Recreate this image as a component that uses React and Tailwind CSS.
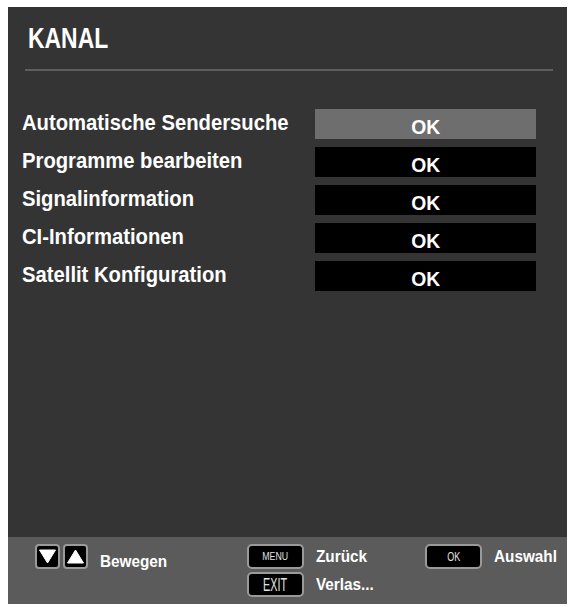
import React from "react";

const rows = [
  "Automatische Sendersuche",
  "Programme bearbeiten",
  "Signalinformation",
  "CI-Informationen",
  "Satellit Konfiguration",
];

const Key = ({ children, textClass }) => (
  <div className="flex h-[25px] w-[57px] shrink-0 items-center justify-center rounded-[5px] border-2 border-[#9a9a9a] bg-black">
    <span className={`inline-block font-normal leading-none text-[#e0e0e0] ${textClass}`}>
      {children}
    </span>
  </div>
);

const ArrowKey = ({ down }) => (
  <div className="flex h-[25px] w-[25px] items-center justify-center rounded-[4px] border-2 border-[#9a9a9a] bg-black">
    <svg width="17" height="15" viewBox="0 0 17 15">
      {down ? (
        <polygon points="0.5,1 16.5,1 8.5,14" fill="#fff" strokeLinejoin="round" stroke="#fff" strokeWidth="1" />
      ) : (
        <polygon points="0.5,14 16.5,14 8.5,1" fill="#fff" strokeLinejoin="round" stroke="#fff" strokeWidth="1" />
      )}
    </svg>
  </div>
);

export default function App() {
  return (
    <div className="min-h-[607px] w-[574px] bg-white pt-[7px] pl-[8px] font-['Liberation_Sans',Arial,sans-serif] font-bold text-white">
      <div className="flex h-[597px] w-[559px] flex-col bg-[#343434]">
        {/* Title */}
        <div className="px-[20px] pt-[17px]">
          <h1 className="origin-left scale-x-[0.79] text-[29px] leading-[29px]">KANAL</h1>
        </div>
        <div className="ml-[17px] mr-[14px] mt-[16px] h-[2px] bg-[#5e5e5e]" />

        {/* Menu rows */}
        <div className="mt-[38px] flex flex-col gap-[8px] pl-[14px]">
          {rows.map((label, i) => (
            <div key={label} className="flex h-[30px] items-center">
              <div className="w-[293px]">
                <span className="inline-block origin-left scale-x-[0.92] whitespace-nowrap text-[22px] leading-none">
                  {label}
                </span>
              </div>
              <div
                className={`flex h-[30px] w-[221px] items-center justify-center pt-[5px] ${
                  i === 0 ? "bg-[#6e6e6e]" : "bg-black"
                }`}
              >
                <span className="inline-block scale-x-[0.92] text-[21px] leading-none">OK</span>
              </div>
            </div>
          ))}
        </div>

        <div className="flex-1" />

        {/* Footer */}
        <div className="flex h-[67px] bg-[#5b5b5b] pt-[7px] text-[17px] leading-none">
          <div className="ml-[27px] flex h-[25px] items-center gap-[3px]">
            <ArrowKey down />
            <ArrowKey />
          </div>
          <div className="ml-[12px] mt-[9px] w-[147px]">
            <span className="inline-block origin-left scale-x-[0.9]">Bewegen</span>
          </div>

          <div className="flex w-[178px] flex-col gap-[3px]">
            <div className="flex h-[25px] items-center">
              <Key textClass="scale-x-[0.8] text-[11px]">MENU</Key>
              <span className="ml-[12px] inline-block origin-left scale-x-[0.9]">Zurück</span>
            </div>
            <div className="flex h-[25px] items-center">
              <Key textClass="scale-x-[0.6] text-[18px]">EXIT</Key>
              <span className="ml-[12px] inline-block origin-left scale-x-[0.9]">Verlas...</span>
            </div>
          </div>

          <div className="flex h-[25px] items-center">
            <Key textClass="scale-x-[0.75] text-[12px]">OK</Key>
            <span className="ml-[12px] inline-block origin-left scale-x-[0.9] whitespace-nowrap">
              Auswahl
            </span>
          </div>
        </div>
      </div>
    </div>
  );
}
